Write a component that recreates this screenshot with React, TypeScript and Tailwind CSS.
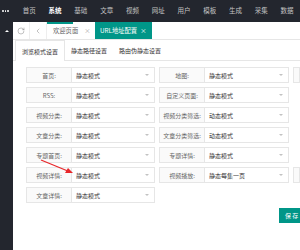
import { RotateCw, ChevronLeft } from 'lucide-react';

const nav = ['首页', '系统', '基础', '文章', '视频', '网址', '用户', '模板', '生成', '采集', '数据'];

type Item = { label: string; value: string };

const rows: { left: Item; right?: Item; third?: boolean }[] = [
  { left: { label: '首页:', value: '静态模式' }, right: { label: '地图:', value: '静态模式' }, third: true },
  { left: { label: 'RSS:', value: '静态模式' }, right: { label: '自定义页面:', value: '静态模式' } },
  { left: { label: '视频分类:', value: '静态模式' }, right: { label: '视频分类筛选:', value: '动态模式' } },
  { left: { label: '文章分类:', value: '静态模式' }, right: { label: '文章分类筛选:', value: '动态模式' } },
  { left: { label: '专题首页:', value: '静态模式' }, right: { label: '专题详情:', value: '静态模式' } },
  { left: { label: '视频详情:', value: '静态模式' }, right: { label: '视频播放:', value: '静态每集一页' }, third: true },
  { left: { label: '文章详情:', value: '静态模式' } },
];

function Field({ item, selectW }: { item: Item; selectW: string }) {
  return (
    <div className="flex h-[16px]">
      <div className="w-[46px] flex items-center justify-center border border-[#e6e6e6] bg-[#fafafa] text-[#666]">
        {item.label}
      </div>
      <div className={`${selectW} flex items-center justify-between border border-l-0 border-[#e6e6e6] bg-white pl-[4px] pr-[5px] text-[#333]`}>
        <span>{item.value}</span>
        <span className="h-0 w-0 border-x-[2.5px] border-t-[2.5px] border-x-transparent border-t-[#c2c2c2]" />
      </div>
    </div>
  );
}

export default function App() {
  return (
    <div
      className="relative w-[300px] h-[250px] overflow-hidden flex flex-col bg-white"
      style={{ fontFamily: '"Noto Sans CJK SC", "Noto Sans", sans-serif' }}
    >
      {/* Top bar */}
      <div className="h-[22px] flex items-center bg-[#23262e] text-[6.5px] text-[#c2c2c2] shrink-0">
        <div className="w-[19.6px] flex justify-center gap-[1px] pr-[5px]">
          <span className="w-[1.5px] h-[1.5px] bg-white rounded-full" />
          <span className="w-[1.5px] h-[1.5px] bg-white rounded-full" />
          <span className="w-[1.5px] h-[1.5px] bg-white rounded-full" />
        </div>
        {nav.map((n) => (
          <div
            key={n}
            className={`px-[6.4px] whitespace-nowrap ${n === '系统' ? 'text-white font-bold' : ''}`}
          >
            {n}
          </div>
        ))}
      </div>

      <div className="flex flex-1 min-h-0">
        {/* Sidebar */}
        <div className="w-[13px] bg-[#23262e] shrink-0 flex flex-col items-center pt-[7.5px]">
          <span className="h-0 w-0 border-x-[2px] border-b-[2.5px] border-x-transparent border-b-white" />
        </div>

        {/* Main */}
        <div className="flex-1 flex flex-col text-[6px] min-w-0">
          {/* Tab bar */}
          <div className="h-[18px] flex items-stretch border-b border-[#e6e6e6] text-[6.3px] shrink-0">
            <div className="w-[17px] flex items-center justify-center border-r border-[#eee] text-[#666]">
              <RotateCw size={8} strokeWidth={1.2} />
            </div>
            <div className="w-[17px] flex items-center justify-center border-r border-[#eee] text-[#666]">
              <ChevronLeft size={8} strokeWidth={1.2} />
            </div>
            <div className="relative w-[48px] flex items-center pl-[6px] text-[#666]">
              <span className="absolute left-0 top-0 w-[26px] h-[2px] bg-[#009688]" />
              <span>欢迎页面</span>
              <span className="ml-[6px] text-[#aaa]">×</span>
            </div>
            <div className="w-[57px] flex items-center pl-[5px] bg-[#009688] text-white">
              <span>URL地址配置</span>
              <span className="ml-[3px]">×</span>
            </div>
          </div>

          {/* Sub tabs */}
          <div className="h-[21px] flex border-b border-[#e6e6e6] pl-[2px] text-[#333] shrink-0">
            <div className="px-[6px] flex items-center border border-b-0 border-[#e6e6e6] bg-white -mb-px">
              浏览模式设置
            </div>
            <div className="px-[6px] flex items-center">静态路径设置</div>
            <div className="px-[6px] flex items-center">路由伪静态设置</div>
          </div>

          {/* Form */}
          <div className="flex flex-col gap-[4px] pl-[13px] pt-[6px]">
            {rows.map((r, i) => (
              <div key={i} className="flex gap-[4px]">
                <Field item={r.left} selectW="w-[83px]" />
                {r.right && <Field item={r.right} selectW="w-[84px]" />}
                {r.third && <div className="w-[20px] h-[16px] border border-[#e6e6e6] bg-[#fafafa]" />}
              </div>
            ))}
          </div>

          <div className="pl-[266px] pt-[5px]">
            <button className="w-[30px] h-[15px] bg-[#009688] text-white text-[6px] flex items-center pl-[6px]">
              保 存
            </button>
          </div>
        </div>
      </div>

      {/* Annotation arrow */}
      <svg className="absolute left-0 top-0 pointer-events-none" width="300" height="250">
        <line x1="41" y1="160" x2="69" y2="171.5" stroke="#e8262a" strokeWidth="1.2" />
        <polygon points="73,173 65,173 68,168" fill="#e8262a" />
      </svg>
    </div>
  );
}
